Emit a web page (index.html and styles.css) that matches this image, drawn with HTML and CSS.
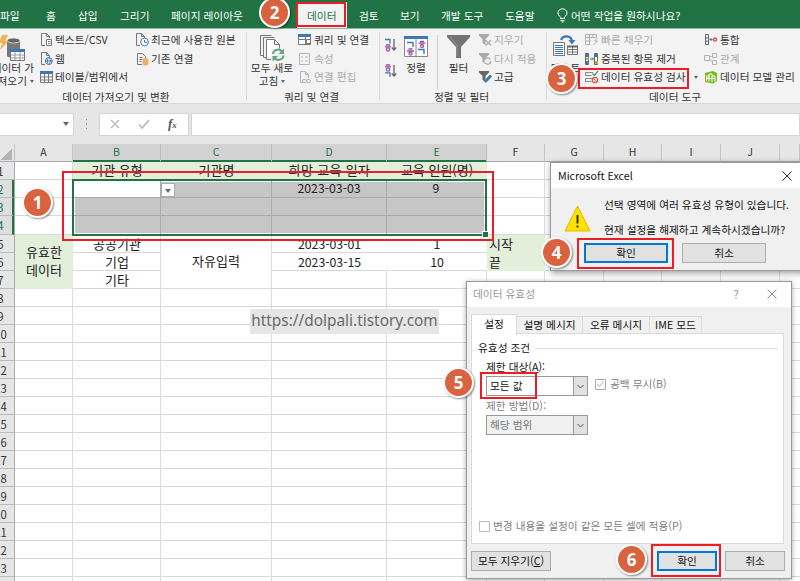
FILE: index.html
```html
<!DOCTYPE html>
<html lang="ko">
<head>
<meta charset="utf-8">
<title>Excel</title>
<link rel="stylesheet" href="styles.css">
</head>
<body>
<nav class="tabs">
  <span>파일</span><span>홈</span><span>삽입</span><span>그리기</span><span>페이지 레이아웃</span><span class="active">데이터</span><span>검토</span><span>보기</span><span>개발 도구</span><span>도움말</span>
  <svg width="11" height="15" viewBox="0 0 11 15" fill="none" stroke="#fff"><path d="M3.5 10.5V9C1.5 7.500 1 6.500 1 5a4.500 4.200 0 0 1 9 0c0 1.500-.5 2.500-2.500 4v1.500zM3.500 12.500h4M4.500 14h2"/></svg>
  <span>어떤 작업을 원하시나요?</span>
</nav>

<section class="ribbon">
  <div class="group g1">
    <div class="tools">
      <div class="big">
        <svg width="28" height="27" viewBox="0 0 28 27"><path d="M8 6v15c0 2 13 2 13 0V6z" fill="#777"/><ellipse cx="14.500" cy="5.500" rx="6.500" ry="2.500" fill="#666" stroke="#f3f3f3" stroke-width=".7"/><path d="M3 0h6L6 6h4L1 15l2-7H0z" fill="#eeb45c"/><path d="M11.500 14.500h14v11h-14z" fill="#fff" stroke="#777"/><path d="M11 14h15v3H11z" fill="#3c78b5"/><path d="M12 20h13M12 23h13M16 17v8M21 17v8" stroke="#999"/></svg>
        <p>데이터 가<br>져오기 <i class="caret"></i></p>
      </div>
      <div class="list">
        <div><svg width="13" height="14" viewBox="0 0 13 14" fill="none" stroke="#777"><path d="M5 12.500H1.500v-12h5l3 3V5M6.500.5v3h3"/><path d="M6.500 6.500h5v6h-5zM8 8.500h2.500M8 10.500h2.500" fill="#fff"/></svg>텍스트/CSV</div>
        <div><svg width="13" height="14" viewBox="0 0 13 14" fill="none" stroke="#777"><path d="M5 12.500H1.500v-12h5l3 3V5M6.500.5v3h3"/><circle cx="8.800" cy="9" r="3.500" fill="#fff" stroke="#3c78b5"/><path d="M5.500 9h7M8.800 5.500c-2 2-2 5 0 7c2-2 2-5 0-7" stroke="#3c78b5"/></svg>웹</div>
        <div><svg width="13" height="14" viewBox="0 0 13 14" fill="none" stroke="#777"><path d="M.5 1.500h12v11H.5zM1 7h11M1 10h11M4.500 4v8M8.500 4v8" fill="#fff"/><path d="M0 1h13v3H0z" fill="#3c78b5" stroke="none"/></svg>테이블/범위에서</div>
      </div>
      <div class="list">
        <div><svg width="14" height="14" viewBox="0 0 14 14" fill="none" stroke="#777"><path d="M5 12.500H1.500v-12h5l3 3V5M6.500.5v3h3"/><circle cx="9.500" cy="9" r="3.800" fill="#fff" stroke="#3c78b5"/><path d="M9.500 7v2.300H12" stroke="#3c78b5"/></svg>최근에 사용한 원본</div>
        <div><svg width="14" height="14" viewBox="0 0 14 14" fill="none" stroke="#777"><path d="M7 12.500H2.500v-11h5l3 3V6M4.500 5.500h3M4.500 7.500h3M4.500 9.500h2"/><path d="M8 7.500v4.500c0 1.500 5 1.500 5 0V7.500c0-1.500-5-1.500-5 0" fill="#e8b264" stroke="#e8b264"/></svg>기존 연결</div>
      </div>
    </div>
    <h2>데이터 가져오기 및 변환</h2>
  </div>

  <div class="group g2">
    <div class="tools">
      <div class="big">
        <svg width="26" height="27" viewBox="0 0 26 27" fill="none" stroke="#777"><path d="M4 20.500H1.500V.5h11M7 22.500H4.500v-20h11"/><path d="M12 24.500H7.500v-20h8l5 5v4M15.500 4.500v5h5" fill="#fff"/><path d="M12 14h14v13H12z" fill="#f3f3f3" stroke="none"/><path d="M14 19a5 5 0 0 1 9.500-1.500M24.500 20.500a5 5 0 0 1-9.500 1.500" stroke="#5ea485" stroke-width="2"/><path d="M25 13.500v5.500h-5.500zM13.500 26.500V21H19z" fill="#5ea485" stroke="none"/></svg>
        <p>모두 새로<br>고침 <i class="caret"></i></p>
      </div>
      <div class="list">
        <div><svg width="14" height="14" viewBox="0 0 14 14" fill="none" stroke="#777"><path d="M.5 1.500h12v10H.5zM1 6.500h6M7.500 4v7" fill="#fff"/><path d="M8.500 6.500h4v4h-4z" fill="#fff"/><path d="M0 1h13v3H0z" fill="#3c78b5" stroke="none"/></svg>쿼리 및 연결</div>
        <div class="off"><svg width="14" height="14" viewBox="0 0 14 14" fill="none" stroke="#b5b5b5"><path d="M1.500 1.500h10v11h-10zM3 5h2M3 9h2M7 5h3M7 9h3"/></svg>속성</div>
        <div class="off"><svg width="14" height="14" viewBox="0 0 14 14" fill="none" stroke="#b5b5b5"><path d="M5 12.500H2.500V1.500h5l3 3V8M7.500 1.500v3h3"/><rect x="4.500" y="9.500" width="4" height="3" rx="1.500"/><rect x="8.500" y="9.500" width="4" height="3" rx="1.500"/></svg>연결 편집</div>
      </div>
    </div>
    <h2>쿼리 및 연결</h2>
  </div>

  <div class="group g3">
    <div class="tools">
      <div class="sorts">
        <svg width="13" height="14" viewBox="0 0 13 14" fill="none" stroke-width="1.300"><path d="M1 1.500h5v4" stroke="#3c78b5"/><path d="M2 7h4M1 8.800h6" stroke="#9650a8"/><circle cx="4" cy="11.500" r="1.600" stroke="#9650a8"/><path d="M10 1v11M7.800 9.500l2.200 2.500 2.200-2.500" stroke="#666"/></svg>
        <svg width="13" height="14" viewBox="0 0 13 14" fill="none" stroke-width="1.300"><path d="M2 1h4M1 2.800h6" stroke="#9650a8"/><circle cx="4" cy="5.500" r="1.600" stroke="#9650a8"/><path d="M1 8.800h5v4" stroke="#3c78b5"/><path d="M10 1v11M7.800 9.500l2.200 2.500 2.200-2.500" stroke="#666"/></svg>
      </div>
      <div class="big">
        <svg width="24" height="22" viewBox="0 0 24 22" fill="none"><path d="M.5.500h23v20H.5zM12 3v17.500" fill="#fff" stroke="#888"/><path d="M0 0h24v3H0z" fill="#3c78b5"/><path d="M3 6.500h6v4.500M14 13.500h6V18" stroke="#3c78b5" stroke-width="1.400"/><path d="M4.500 13h4M3 15h7M16 5.500h4M14.500 7.200h7" stroke="#9650a8" stroke-width="1.300"/><circle cx="6.500" cy="17.500" r="1.500" stroke="#9650a8" stroke-width="1.300"/><circle cx="18" cy="10" r="1.500" stroke="#9650a8" stroke-width="1.300"/></svg>
        <p>정렬</p>
      </div>
      <div class="big filter">
        <svg width="23" height="23" viewBox="0 0 23 23"><path d="M0 0h23v2l-9 10v11h-5V12L0 2z" fill="#737373"/><path d="M3 1.500l7 9v11" fill="none" stroke="#999"/></svg>
        <p>필터</p>
      </div>
      <div class="list">
        <div class="off"><svg width="13" height="14" viewBox="0 0 13 14"><path d="M0 1h10v1.500L6.500 6v6l-3-2V6L0 2.500z" fill="#aaa"/><path d="M6.500 7l5.500 5.500m0-5.500l-5.500 5.500" stroke="#aaa" stroke-width="1.300"/></svg>지우기</div>
        <div class="off"><svg width="13" height="14" viewBox="0 0 13 14" fill="none"><path d="M0 1h10v1.500L6.500 6v6l-3-2V6L0 2.500z" fill="#aaa"/><circle cx="8.500" cy="9" r="3.200" fill="#f3f3f3" stroke="#aaa" stroke-width="1.300" stroke-dasharray="8 2"/></svg>다시 적용</div>
        <div><svg width="13" height="14" viewBox="0 0 13 14"><path d="M0 1h10v1.500L6.500 6v6l-3-2V6L0 2.500z" fill="#666"/><path d="M11 5l1.500 1.500L8 11.500l-2 .7.500-2.200z" fill="#3c78b5" stroke="#3c78b5"/></svg>고급</div>
      </div>
    </div>
    <h2>정렬 및 필터</h2>
  </div>

  <div class="group g4">
    <div class="tools">
      <div class="big">
        <svg width="25" height="22" viewBox="0 0 25 22" fill="none"><path d="M.5 7.500h11v13H.5z" fill="#fff" stroke="#777"/><path d="M2 10.500h8M2 12.500h8M2 14.500h8M2 16.500h8M2 18.500h8" stroke="#3c78b5"/><path d="M14.500 11.500h10v8h-10zM15 14.500h9M15 17h9M19.500 12v7" fill="#fff" stroke="#777"/><path d="M14 10.500h11v2H14z" fill="#666"/><path d="M8 5C10 0 18 0 19 6" stroke="#3c78b5" stroke-width="2.200"/><path d="M15.500 5h7L19 9.500z" fill="#3c78b5"/></svg>
        <p>텍스트</p>
      </div>
      <div class="list">
        <div class="off"><svg width="14" height="14" viewBox="0 0 14 14" fill="none" stroke="#b0b0b0"><path d="M.5 1.500h11v3M.5 1.500v10h5M1 4.500h10M1 8h5M4.500 2v9M8 2v3M12.500 5l-3 3h3l-4 4"/></svg>빠른 채우기</div>
        <div><svg width="14" height="14" viewBox="0 0 14 14"><path d="M.5 1.500h3v11h-3zM9.500 1.500h3v11h-3z" fill="#fff" stroke="#666"/><path d="M1 2h3v3H1zM1 9h3v3H1zM10 2h3v3h-3z" fill="#3c78b5"/><path d="M1 6h3v2H1zM10 9h3v3h-3z" fill="#d39a40"/><path d="M5 7h3.500M7 5.500L8.500 7 7 8.500" stroke="#3c78b5" fill="none"/></svg>중복된 항목 제거</div>
        <div><svg width="14" height="14" viewBox="0 0 14 14" fill="none"><path d="M8 2.500H.5v3h6M8 8.500H.5v3h6" stroke="#888"/><path d="M7.500 3.500l2 2L13 .8" stroke="#4c9b78" stroke-width="1.400"/><circle cx="10" cy="10" r="2.700" stroke="#dc5b45" stroke-width="1.300"/><path d="M8 8l4 4" stroke="#dc5b45"/></svg>데이터 유효성 검사 <i class="caret"></i></div>
      </div>
      <div class="list">
        <div><svg width="14" height="14" viewBox="0 0 14 14" fill="none"><path d="M1.500 1.500h3v10h-3zM2 4.800h2M2 8.200h2" stroke="#666"/><path d="M5.500 6.500h3M7 5v3" stroke="#3c78b5"/><circle cx="11" cy="6.500" r="1.600" stroke="#dc5b45" stroke-width="1.500"/></svg>통합</div>
        <div class="off"><svg width="14" height="14" viewBox="0 0 14 14" fill="none" stroke="#b0b0b0"><path d="M.5 3.500h5v5h-5zM8.500 1.500h4v4h-4zM8.500 8.500h4v4h-4zM5.500 5l3-1M5.500 7l3 3"/></svg>관계</div>
        <div><svg width="14" height="14" viewBox="0 0 14 14" fill="none"><path d="M1 3l8-2 4 2v8l-4 2.500-8-1.500z" fill="#78ba21"/><path d="M2.500 11V6H5v5.500M5 8V4h3v8M8 6h3v5.500M2.500 8.500H11" stroke="#fff"/></svg>데이터 모델 관리</div>
      </div>
    </div>
    <h2>데이터 도구</h2>
  </div>
</section>

<section class="formula">
  <div class="namebox"><i class="caret"></i></div>
  <span class="dots"><i></i><i></i><i></i></span>
  <div class="fxbox">
    <svg width="10" height="10" viewBox="0 0 10 10" stroke="#bbb" stroke-width="1.400"><path d="M1 1l8 8M9 1L1 9"/></svg>
    <svg width="12" height="10" viewBox="0 0 12 10" fill="none" stroke="#bbb" stroke-width="1.800"><path d="M1 5.500L4 9l7-8"/></svg>
    <em>f<small>x</small></em>
  </div>
  <div class="entry"></div>
</section>

<main class="sheet">
  <div class="heads">
    <span class="corner"></span><span>A</span><span class="on">B</span><span class="on">C</span><span class="on">D</span><span class="on">E</span><span>F</span><span>G</span><span>H</span><span>I</span><span>J</span><span></span>
  </div>
  <div class="body">
    <div class="rows">
      <span>1</span><span class="on">2</span><span class="on">3</span><span class="on tall">4</span><span>5</span><span>6</span><span>7</span><span>8</span><span>9</span><span>10</span><span>11</span><span>12</span><span>13</span><span>14</span><span>15</span><span>16</span><span>17</span><span>18</span><span>19</span><span>20</span><span>21</span><span>22</span><span>23</span><span></span>
    </div>
    <div class="cells">
      <div class="c green r1 cB">기관 유형</div><div class="c green r1 cC">기관명</div><div class="c green r1 cD wide">희망 교육 일자</div><div class="c green r1 cE">교육 인원(명)</div>
      <div class="selection"><i class="first"></i><i></i><i class="num">2023-03-03</i><i class="num">9</i><i></i><i></i><i></i><i></i><i></i><i></i><i></i><i></i><b class="handle"></b></div>
      <div class="c green merged cA">유효한<br>데이터</div>
      <div class="c r5 cB">공공기관</div><div class="c r6 cB">기업</div><div class="c r7 cB">기타</div>
      <div class="c merged line cC">자유입력</div>
      <div class="c num plain r5 cD">2023-03-01</div><div class="c num plain r5 cE">1</div>
      <div class="c num plain r6 cD">2023-03-15</div><div class="c num plain r6 cE">10</div>
      <div class="c green left r5 cF">시작</div><div class="c green left r6 cF">끝</div>
    </div>
  </div>
</main>

<button class="dropdown"><i class="caret"></i></button>
<div class="watermark">https://dolpali.tistory.com</div>

<section class="dialog validation">
  <header><span>데이터 유효성</span><span class="help">?</span><svg width="10" height="10" viewBox="0 0 10 10" stroke="#888"><path d="M.5.500l9 9M9.500.500l-9 9"/></svg></header>
  <div class="dtabs"><span class="cur">설정</span><span>설명 메시지</span><span>오류 메시지</span><span>IME 모드</span></div>
  <div class="panel">
    <h3>유효성 조건</h3>
    <div class="fields">
      <label>제한 대상(<u>A</u>):</label>
      <div class="line1"><div class="select">모든 값<i><svg width="7" height="5" viewBox="0 0 7 5" fill="none" stroke="#555"><path d="M.5 1l3 3 3-3"/></svg></i></div><span class="check"><svg width="11" height="11" viewBox="0 0 11 11" fill="none" stroke="#aaa"><path d="M.5.500h10v10H.5zM2.500 5l2 2.500 4-5"/></svg>공백 무시(B)</span></div>
      <label class="gray">제한 방법(D):</label>
      <div class="select disabled">해당 범위<i><svg width="7" height="5" viewBox="0 0 7 5" fill="none" stroke="#555"><path d="M.5 1l3 3 3-3"/></svg></i></div>
    </div>
    <span class="check all"><svg width="11" height="11" viewBox="0 0 11 11" fill="none" stroke="#bbb"><path d="M.5.500h10v10H.5z"/></svg>변경 내용을 설정이 같은 모든 셀에 적용(P)</span>
  </div>
  <footer><button class="clear">모두 지우기(<u>C</u>)</button><button class="primary">확인</button><button>취소</button></footer>
</section>

<section class="dialog alert">
  <header><span>Microsoft Excel</span><svg width="10" height="10" viewBox="0 0 10 10" stroke="#222"><path d="M.5.500l9 9M9.500.500l-9 9"/></svg></header>
  <div class="message">
    <svg width="27" height="27" viewBox="0 0 27 27"><path d="M13.500 1L26 26H1z" fill="#fde100" stroke="#e9b600" stroke-linejoin="round"/><path d="M13.500 10v8.500M13.500 20.500v2" stroke="#222" stroke-width="1.800"/></svg>
    <p>선택 영역에 여러 유효성 유형이 있습니다.<br>현재 설정을 해제하고 계속하시겠습니까?</p>
  </div>
  <footer><button class="primary">확인</button><button>취소</button></footer>
</section>

<div class="mark m1"></div><div class="mark m2"></div><div class="mark m3"></div><div class="mark m4"></div><div class="mark m5"></div><div class="mark m6"></div>
<b class="badge b1">1</b><b class="badge b2">2</b><b class="badge b3">3</b><b class="badge b4">4</b><b class="badge b5">5</b><b class="badge b6">6</b>
</body>
</html>
```
FILE: styles.css
```css
* { box-sizing: border-box; }
body {
  margin: 0; width: 800px; height: 581px; overflow: hidden; position: relative;
  background: #e6e6e6; color: #333;
  font: 10.7px/12px "Noto Sans CJK KR", sans-serif; white-space: nowrap;
}
h2, h3, p { margin: 0; font-size: inherit; font-weight: normal; }
i { font-style: normal; }
svg { display: block; flex: none; }
button { font: inherit; color: #111; padding: 0; margin: 0; }
.caret { display: inline-block; border: 2.5px solid transparent; border-top: 3px solid #666; border-bottom: 0; vertical-align: 2px; }

/* Ribbon tabs */
.tabs {
  display: grid; height: 28px; background: #217346; color: #fff; align-items: end;
  grid-template-columns: 46px 32px 42px 51px 136px 52px 41px 41px 64px 52px 14px 1fr;
}
.tabs span { height: 26px; line-height: 27px; }
.tabs svg { align-self: center; margin-top: 3px; }
.tabs .active { width: 50px; background: #f3f3f3; color: #217346; margin-left: -10px; padding-left: 10px; }

/* Ribbon */
.ribbon { display: grid; grid-template-columns: 246px 133px 167px 1fr; height: 76px; background: #f3f3f3 linear-gradient(#8fb9a0, #8fb9a0) 0 0 / 100% 1px no-repeat; border-bottom: 1px solid #d8d8d8; }
.group { position: relative; overflow: hidden; display: grid; grid-template-rows: 62px 12px; }
.group + .group::before { content: ""; position: absolute; left: -1px; top: 4px; width: 2px; height: 68px; background: #dcdcdc; }
.group h2 { text-align: center; line-height: 14px; }
.g1 h2 { padding-right: 14px; }
.g2 h2 { padding-right: 2px; }
.g3 h2 { padding-right: 2px; }
.group.g4 h2 { padding: 0 0 0 103px; text-align: left; }
.tools { display: flex; }
.list { display: grid; grid-template-rows: repeat(3, 18.5px); align-content: start; padding-top: 3px; }
.list > div { display: flex; align-items: center; gap: 2px; }
.off { color: #aaa; }
.big { display: flex; flex-direction: column; align-items: center; padding-top: 7px; }
.big p { text-align: center; line-height: 12.5px; height: 28px; }
.big svg { margin-bottom: auto; }
.g1 .big { width: 54px; margin-left: -14px; }
.g1 .big p { text-align: right; width: 100%; padding-right: 6px; }
.g1 .list { width: 95px; }
.g2 .big { width: 52px; }
.g2 .list { gap: 0; }
.sorts { width: 25px; display: flex; flex-direction: column; gap: 12px; padding: 10px 0 0 5px; }
.g3 .big { width: 24px; padding-top: 8px; }
.g3 .filter { width: 42px; margin-left: 9px; border-left: 1px solid #d0d0d0; padding-top: 0; margin-top: 7px; }
.g4 .big { width: 39px; padding: 7px 0 0; }
.g4 .list { width: 119px; }
.g4 .list .caret { margin-left: 6px; }

/* Formula bar */
.formula { display: flex; align-items: center; height: 40px; }
.formula > div { background: #fff; border: 1px solid #d4d4d4; height: 23px; }
.formula .namebox { width: 74px; border-left: 0; text-align: right; padding: 4px 4px 0 0; }
.namebox .caret, .dropdown .caret { border-width: 4px 3px 0; }
.dots { width: 25px; display: grid; gap: 3px; justify-content: center; }
.dots i { width: 1px; height: 1.5px; background: #999; }
.fxbox { width: 90px; display: flex; align-items: center; padding-left: 10px; gap: 18px; }
.fxbox em { font: italic bold 13px/18px "Liberation Serif", serif; color: #555; }
.fxbox small { font-size: 9px; }
.entry { flex: 1; margin-left: 2px; }

/* Worksheet */
.sheet { height: 437px; overflow: hidden; }
.heads { display: grid; height: 18px; grid-template-columns: 15px 58px 88px 111px 115px 100px 58px 59px 58px 59px 59px 20px; border-bottom: 1px solid #aaa; font-size: 10.5px; line-height: 15px; text-align: center; }
.heads span { border-right: 1px solid #c4c4c4; }
.heads .on { background: #d2d2d2; color: #217346; border-color: #bbb; border-bottom: 1px solid #217346; height: 18px; box-shadow: inset 0 -1px #217346; }
.heads .corner { background: linear-gradient(135deg, transparent 50%, #b4b4b4 50%) right 2px bottom 2px / 11px 12px no-repeat; }
.body { display: flex; }
.rows { width: 28px; margin-left: -13px; border-right: 1px solid #aaa; flex: none; }
.rows span { display: block; height: 18px; line-height: 19px; text-align: center; font-size: 11.3px; border-bottom: 1px solid #bbb; }
.rows .tall { height: 19px; }
.rows .on { color: #217346; border-right: 2px solid #217346; padding-left: 2px; background: #dedede; }
.cells {
  display: grid; flex: 1; background-color: #fff;
  grid-template-columns: 58px 88px 111px 115px 100px 58px 59px 58px 59px 59px 20px;
  grid-template-rows: repeat(3, 18px) 19px repeat(20, 18px);
  background-image:
    linear-gradient(to right, transparent 57px, #dcdcdc 57px 58px, transparent 58px 145px, #dcdcdc 145px 146px, transparent 146px 256px, #dcdcdc 256px 257px, transparent 257px 371px, #dcdcdc 371px 372px, transparent 372px 471px, #dcdcdc 471px 472px, transparent 472px 529px, #dcdcdc 529px 530px, transparent 530px 588px, #dcdcdc 588px 589px, transparent 589px 646px, #dcdcdc 646px 647px, transparent 647px 705px, #dcdcdc 705px 706px, transparent 706px 764px, #dcdcdc 764px 765px, transparent 765px),
    repeating-linear-gradient(to bottom, transparent 0 17px, #d8d8d8 17px 18px),
    repeating-linear-gradient(to bottom, transparent 0 17px, #d8d8d8 17px 18px);
  background-size: auto, 100% 54px, 100% 400px;
  background-position: 0 0, 0 0, 0 55px;
  background-repeat: no-repeat;
}
.c { text-align: center; font-size: 13px; line-height: 17px; color: #222; overflow: hidden; }
.num { font-size: 12.3px; }
.plain { background: #fff; border-bottom: 1px solid #d8d8d8; line-height: 18px; }
.wide { letter-spacing: .35px; }
.green { background: #e2efda; }
.left { text-align: left; padding-left: 2px; }
.r1 { grid-row: 1; line-height: 15px; } .r5 { grid-row: 5; } .r6 { grid-row: 6; } .r7 { grid-row: 7; }
.cA { grid-column: 1; } .cB { grid-column: 2; } .cC { grid-column: 3; } .cD { grid-column: 4; } .cE { grid-column: 5; } .cF { grid-column: 6; }
.merged { grid-row: 5 / 8; line-height: 18px; padding-top: 8px; }
.merged.line { background: #fff; border: solid #dcdcdc; border-width: 0 1px 1px 0; padding-top: 17px; }
.selection {
  grid-area: 2 / 2 / 5 / 6; position: relative; display: grid; margin: -1px 0 -1px -1px;
  grid-template-columns: 87px 111px 115px 1fr; grid-template-rows: 17px 18px 1fr;
  border: 2px solid #217346; background: #c6c6c6; box-shadow: inset 0 0 0 1px #fff;
}
.selection i { text-align: center; line-height: 15px; color: #222; border: solid #aaa; border-width: 0 1px 1px 0; }
.selection i:nth-of-type(4n) { border-right: 0; }
.selection i:nth-of-type(n+9) { border-bottom: 0; }
.selection .first { background: #fff; }
.handle { position: absolute; right: -3px; bottom: -3px; width: 5px; height: 5px; background: #217346; outline: 1px solid #fff; }

.dropdown { position: absolute; left: 161px; top: 183px; width: 14px; height: 14px; background: #fff; border: 1px solid #aab; line-height: 9px; }
.watermark { position: absolute; left: 250px; top: 309px; width: 189px; height: 25px; background: #e6e6e6; color: #6a6a6a; font: 15.4px/24px "Noto Sans", sans-serif; text-align: center; }

/* Dialogs */
.dialog { position: absolute; background: #f0f0f0; border: 1px solid #999; box-shadow: 1px 2px 7px rgba(0,0,0,.4); color: #111; }
.dialog header { display: flex; align-items: center; background: #fff; }
.dialog footer { display: flex; }
.dialog button { background: #e1e1e1; border: 1px solid #adadad; }
.dialog .primary { border: 2px solid #0078d7; }
.alert { left: 550px; top: 162px; width: 260px; height: 109px; }
.alert header { height: 25px; padding: 0 17px 0 7px; justify-content: space-between; }
.message { display: flex; height: 55px; padding: 5px 0 0 13px; }
.message svg { margin-top: 12px; }
.message p { margin-left: 13px; line-height: 24.5px; }
.alert footer { padding-left: 33px; gap: 14px; }
.alert button { width: 84px; height: 20px; line-height: 14px; }

.validation { left: 466px; top: 281px; width: 326px; height: 298px; box-shadow: 0 1px 5px rgba(0,0,0,.35); }
.validation header { height: 25px; color: #999; padding: 0 14px 2px 6px; }
.help { margin: 0 28px 0 auto; font-size: 12px; }
.dtabs { display: flex; align-items: end; height: 27px; padding-left: 4px; }
.dtabs span { height: 18px; line-height: 15px; text-align: center; border: 1px solid #dadada; border-left: 0; border-bottom: 0; width: 67px; }
.dtabs span:nth-child(2) { width: 66px; }
.dtabs span:last-child { width: 52px; }
.dtabs .cur { width: 46px; height: 21px; line-height: 18px; background: #fff; border-left: 1px solid #dadada; margin-bottom: -1px; position: relative; }
.panel { margin: -1px 7px 0 4px; height: 211px; background: #fff; border: 1px solid #dadada; padding: 8px 5px 0 7px; display: flex; flex-direction: column; }
.panel h3 { display: flex; align-items: center; gap: 5px; line-height: 12px; margin-left: -1px; }
.panel h3::after { content: ""; flex: 1; height: 1px; background: #dcdcdc; }
.fields { padding: 7px 0 0 7px; }
.fields label { display: block; height: 15px; line-height: 12px; }
.gray, .check { color: #808080; }
.line1 { display: flex; gap: 7px; margin-bottom: 4px; }
.check { display: flex; align-items: center; gap: 4px; height: 16px; }
.select { width: 102px; height: 20px; border: 1px solid #999; line-height: 18px; padding-left: 3px; display: flex; justify-content: space-between; }
.select i { width: 14px; background: #e1e1e1; border-left: 1px solid #999; display: grid; place-items: center; }
.disabled { background: #f0f0f0; color: #777; }
.all { margin: auto 0 9px; gap: 3px; }
.validation footer { padding: 7px 6px 0 4px; }
.validation button { width: 60px; height: 20px; line-height: 14px; margin-left: 8px; }
.validation .clear { width: 80px; margin: 0 auto 0 0; }

/* Step annotations */
.mark { position: absolute; border: 2px solid #ee1c25; }
.m1 { left: 62px; top: 171px; width: 432px; height: 70px; }
.m2 { left: 296px; top: 2px; width: 50px; height: 25px; }
.m3 { left: 578px; top: 68px; width: 111px; height: 21px; }
.m4 { left: 577px; top: 238px; width: 97px; height: 31px; }
.m5 { left: 480px; top: 372px; width: 57px; height: 27px; }
.m6 { left: 651px; top: 544px; width: 70px; height: 33px; }
.badge { position: absolute; width: 31px; height: 31px; border-radius: 50%; border: 2px solid #fff; background: #d9623f; color: #fff; font: bold 17px/27px "Open Sans", sans-serif; text-align: center; box-shadow: 1px 1px 2px rgba(0,0,0,.45); }
.b1 { left: 22px; top: 187px; }
.b2 { left: 259px; top: -3px; }
.b3 { left: 546px; top: 63px; }
.b4 { left: 541px; top: 237px; }
.b5 { left: 443px; top: 367px; }
.b6 { left: 616px; top: 544px; }
```
